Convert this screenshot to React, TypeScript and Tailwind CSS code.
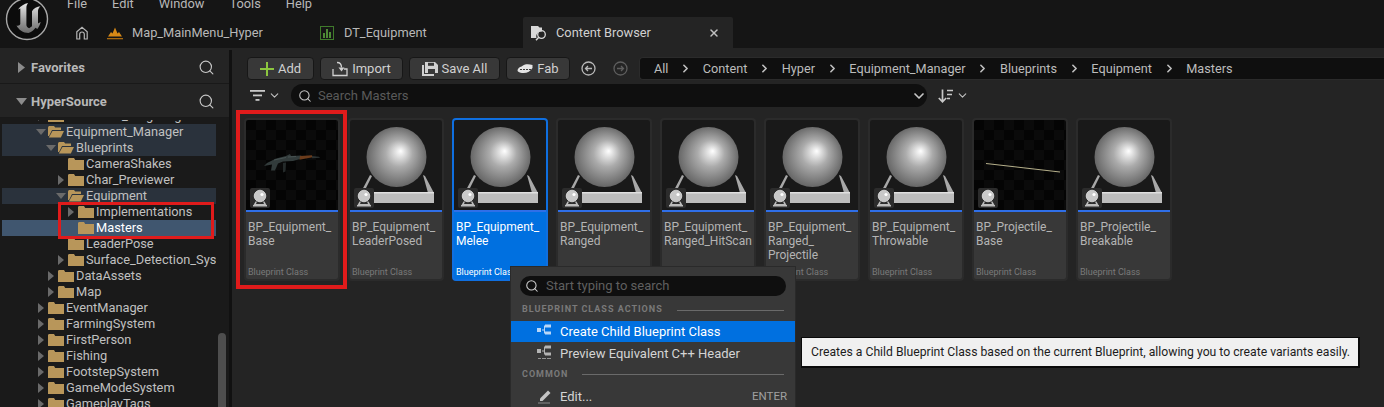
import { ChevronDown, ChevronRight, Search, X } from 'lucide-react';
import clsx from 'clsx';

type TreeRow = {
  name: string;
  depth: 0 | 1 | 2 | 3;
  arrow?: 'open' | 'closed';
  open?: boolean;
  tint?: boolean;
  selected?: boolean;
};

const indent = {
  0: 'pl-[32px]',
  1: 'pl-[42px]',
  2: 'pl-[52px]',
  3: 'pl-[62px]',
};

const treeRows: TreeRow[] = [
  { name: 'Enhanced_Targeting', depth: 0, arrow: 'closed' },
  { name: 'Equipment_Manager', depth: 0, arrow: 'open', open: true, tint: true },
  { name: 'Blueprints', depth: 1, arrow: 'open', open: true, tint: true },
  { name: 'CameraShakes', depth: 2 },
  { name: 'Char_Previewer', depth: 2, arrow: 'closed' },
  { name: 'Equipment', depth: 2, arrow: 'open', open: true, tint: true },
  { name: 'Implementations', depth: 3, arrow: 'closed' },
  { name: 'Masters', depth: 3, selected: true },
  { name: 'LeaderPose', depth: 2 },
  { name: 'Surface_Detection_System', depth: 2, arrow: 'closed' },
  { name: 'DataAssets', depth: 1, arrow: 'closed' },
  { name: 'Map', depth: 1, arrow: 'closed' },
  { name: 'EventManager', depth: 0, arrow: 'closed' },
  { name: 'FarmingSystem', depth: 0, arrow: 'closed' },
  { name: 'FirstPerson', depth: 0, arrow: 'closed' },
  { name: 'Fishing', depth: 0, arrow: 'closed' },
  { name: 'FootstepSystem', depth: 0, arrow: 'closed' },
  { name: 'GameModeSystem', depth: 0, arrow: 'closed' },
  { name: 'GameplayTags', depth: 0, arrow: 'closed' },
];

type Tile = {
  lines: string[];
  thumb: 'gun' | 'sphere' | 'trail';
  selected?: boolean;
};

const tiles: Tile[] = [
  { lines: ['BP_Equipment_', 'Base'], thumb: 'gun' },
  { lines: ['BP_Equipment_', 'LeaderPosed'], thumb: 'sphere' },
  { lines: ['BP_Equipment_', 'Melee'], thumb: 'sphere', selected: true },
  { lines: ['BP_Equipment_', 'Ranged'], thumb: 'sphere' },
  { lines: ['BP_Equipment_', 'Ranged_HitScan'], thumb: 'sphere' },
  { lines: ['BP_Equipment_', 'Ranged_', 'Projectile'], thumb: 'sphere' },
  { lines: ['BP_Equipment_', 'Throwable'], thumb: 'sphere' },
  { lines: ['BP_Projectile_', 'Base'], thumb: 'trail' },
  { lines: ['BP_Projectile_', 'Breakable'], thumb: 'sphere' },
];

const crumbs = ['All', 'Content', 'Hyper', 'Equipment_Manager', 'Blueprints', 'Equipment', 'Masters'];

function Logo() {
  return (
    <svg width="44" height="44" viewBox="0 0 44 44">
      <defs>
        <linearGradient id="logoFill" x1="0" y1="0" x2="0" y2="1">
          <stop offset="0" stopColor="#e8e8e8" />
          <stop offset="0.6" stopColor="#9a9a9a" />
          <stop offset="1" stopColor="#6b6b6b" />
        </linearGradient>
      </defs>
      <circle cx="22" cy="22" r="20.500" fill="#0c0c0c" stroke="#a8a8a8" strokeWidth="1.400" />
      <path
        d="M23 6c-3.500 .8-7.500 3-10 6.500l2.300-1v15.500c-.6 1.500-2 2-3.800 1.500 2 4 6.500 7.500 12 7.500 3.500-1 5.500-3.500 7-5.300l1.800 1.300c1.500-2 2.800-4.500 3.400-7l-2.700 1.400V14c0-1.800 1-3.500 2.500-4.800-3.500 .3-7 2.300-8.500 5v15l-2.800 2c-1.500-.4-2.800-1.600-2.800-3.200V11c0-2 .6-3.500 1.600-5z"
        fill="url(#logoFill)"
      />
    </svg>
  );
}

function HomeIcon() {
  return (
    <svg width="14" height="14" viewBox="0 0 14 14" fill="none" stroke="#b5b5b5" strokeWidth="1.200">
      <path d="M1.800 13V5.800L7 1.300l5.200 4.500V13H9.300V8.300a2.300 2.300 0 0 0-4.600 0V13z" />
    </svg>
  );
}

function LevelIcon() {
  return (
    <svg width="16" height="14" viewBox="0 0 16 14">
      <path d="M1 10.500 4 6l1.500 1.500L8 1.500l2.500 6L12 6l3 4.500z" fill="#d98a16" />
      <rect x="0" y="12" width="16" height="1.300" fill="#a8690f" />
    </svg>
  );
}

function TableIcon() {
  return (
    <svg width="14" height="14" viewBox="0 0 14 14">
      <rect x="0.500" y="0.500" width="13" height="13" fill="none" stroke="#3f7a2b" />
      <rect x="3" y="7" width="2" height="5" fill="#4d8a35" />
      <rect x="6" y="3" width="2" height="9" fill="#4d8a35" />
      <rect x="9" y="6" width="2" height="6" fill="#4d8a35" />
    </svg>
  );
}

function BrowserIcon() {
  return (
    <svg width="16" height="16" viewBox="0 0 16 16">
      <path d="M0 1h7l1.500 1.500H11v4a5 5 0 0 0-5.500 6.500H0z" fill="#d8d8d8" />
      <circle cx="10.500" cy="9.500" r="3.800" fill="none" stroke="#d8d8d8" strokeWidth="1.300" />
      <path d="M7.800 12.200 5 15.200" stroke="#d8d8d8" strokeWidth="1.500" />
    </svg>
  );
}

function Folder({ open }: { open?: boolean }) {
  if (open) {
    return (
      <svg width="16" height="14" viewBox="0 0 16 14" className="shrink-0">
        <path d="M0 2.500 0.800 1H6l1.200 1.500H13V5H4L1 11H0z" fill="#b8965a" />
        <path d="M4.500 6H16l-3.200 6.500H0.800z" fill="#b8965a" />
      </svg>
    );
  }
  return (
    <svg width="16" height="14" viewBox="0 0 16 14" className="shrink-0">
      <path d="M0 2 .8 1H6l1.200 2H16v10H0z" fill="#b8965a" />
    </svg>
  );
}

function Row({ row }: { row: TreeRow }) {
  return (
    <div
      className={clsx('flex h-4 items-center overflow-hidden whitespace-nowrap', indent[row.depth], {
        'bg-[#2a323c]': row.tint,
        'bg-[#40566f] text-white': row.selected,
        'text-[#c0c0c0]': !row.selected,
      })}
    >
      <span className="flex w-3.5 shrink-0 justify-center">
        {row.arrow === 'open' && (
          <svg width="10" height="6" viewBox="0 0 10 6">
            <path d="M0 0h10L5 6z" fill="#6a6a6a" />
          </svg>
        )}
        {row.arrow === 'closed' && (
          <svg width="6" height="10" viewBox="0 0 6 10">
            <path d="M0 0v10l6-5z" fill="#6a6a6a" />
          </svg>
        )}
      </span>
      <Folder open={row.open} />
      <span className="ml-0.5">{row.name}</span>
    </div>
  );
}

function SidebarHeader({ title, open }: { title: string; open?: boolean }) {
  return (
    <div className="flex h-[34px] shrink-0 items-center border-b border-[#191919] bg-[#242424] pl-[16px] pr-[14px] pt-[2px]">
      {open ? (
        <svg width="11" height="7" viewBox="0 0 11 7">
          <path d="M0 0h11L5.500 7z" fill="#8c8c8c" />
        </svg>
      ) : (
        <svg width="7" height="11" viewBox="0 0 7 11" className="mx-0.5">
          <path d="M0 0v11l7-5.500z" fill="#8c8c8c" />
        </svg>
      )}
      <span className="ml-[4px] text-[13px] font-bold text-[#b8b8b8]">{title}</span>
      <Search size={17} strokeWidth={1.600} className="ml-auto text-[#c8c8c8]" />
    </div>
  );
}

function Sidebar() {
  return (
    <aside className="relative flex w-[229px] shrink-0 flex-col overflow-hidden bg-[#1a1a1a]">
      <SidebarHeader title="Favorites" />
      <SidebarHeader title="HyperSource" open />
      <div className="mt-[2px] flex-1 overflow-hidden">
        <div className="-mt-[12px] flex flex-col pl-0.5 pr-[13px] text-[12.800px]">
          {treeRows.map((row) => (
            <Row key={row.name} row={row} />
          ))}
        </div>
      </div>
      {/* scrollbar thumb */}
      <div className="absolute bottom-0 left-[218px] top-[283px] w-2 rounded-t bg-[#4e4e4e]" />
    </aside>
  );
}

function ToolButton({ icon, label, width }: { icon: React.ReactNode; label: string; width: string }) {
  return (
    <button
      className={clsx(
        'flex h-[23px] items-center justify-center gap-1 rounded-[4px] border border-[#171717] bg-[#383838] pt-px text-[13px] text-[#d0d0d0]',
        width,
      )}
    >
      {icon}
      {label}
    </button>
  );
}

function ArrowCircle({ left, dim }: { left?: boolean; dim?: boolean }) {
  return (
    <svg width="15" height="15" viewBox="0 0 15 15" fill="none" stroke={dim ? '#5e5e5e' : '#b8b8b8'} strokeWidth="1.300">
      <circle cx="7.500" cy="7.500" r="6.500" />
      <path d={left ? 'M11 7.500H4.500M7 5 4.500 7.500 7 10' : 'M4 7.500h6.500M8 5l2.500 2.500L8 10'} />
    </svg>
  );
}

function Toolbar() {
  return (
    <div className="flex h-[34px] shrink-0 items-center pl-[15px] pt-[3px]">
      <div className="flex gap-[6px]">
        <ToolButton
          width="w-[67px]"
          label="Add"
          icon={
            <svg width="14" height="14" viewBox="0 0 14 14">
              <path d="M6 0h2v6h6v2H8v6H6V8H0V6h6z" fill="#8cc63f" />
            </svg>
          }
        />
        <ToolButton
          width="w-[83px]"
          label="Import"
          icon={
            <svg width="16" height="16" viewBox="0 0 16 16" fill="none" stroke="#d0d0d0" strokeWidth="1.300">
              <path d="M1 8v6.500h14V8h-3M5 1.500c3 0 4.500 1.500 4.500 5" />
              <path d="M6.500 6.500h6l-3 4z" fill="#d0d0d0" stroke="none" />
            </svg>
          }
        />
        <ToolButton
          width="w-[91px]"
          label="Save All"
          icon={
            <svg width="16" height="14" viewBox="0 0 16 14">
              <path d="M3 0h10l3 3v8H3z" fill="#d0d0d0" />
              <path d="M0 3h2v9h10v2H0z" fill="#d0d0d0" />
              <rect x="6" y="0.800" width="6" height="3" fill="#383838" />
              <rect x="6" y="7" width="7" height="4" fill="#383838" />
            </svg>
          }
        />
        <ToolButton
          width="w-[64px]"
          label="Fab"
          icon={
            <svg width="16" height="12" viewBox="0 0 16 12">
              <path d="M1 6c1-2 3-2 5-3.500C8 1 12 1 15.500 2v3c-2 3-5 5-9 5-2 0-4 0-5.500-1.500-.6-.7-.6-1.500 0-2.500z" fill="#e4e4e4" />
              <path d="M3 6.500h11" stroke="#383838" strokeWidth="1" strokeDasharray="2 1" />
            </svg>
          }
        />
      </div>
      <div className="ml-[9px] flex w-[57px] items-center gap-[17px] pl-0.5">
        <ArrowCircle left />
        <ArrowCircle dim />
      </div>
      <nav className="ml-[3px] flex h-[23px] flex-1 items-center gap-[12.700px] rounded-l-[4px] border-y border-l border-[#2b2b2b] bg-[#0f0f0f] pl-[14px] pt-px text-[12.700px] text-[#bcbcbc]">
        {crumbs.map((crumb, i) => (
          <div key={crumb} className="flex items-center gap-[12.700px]">
            {i > 0 && <ChevronRight size={13} strokeWidth={3} className="-mx-0.5 text-[#c0c0c0]" />}
            <span>{crumb}</span>
          </div>
        ))}
      </nav>
    </div>
  );
}

function SearchRow() {
  return (
    <div className="flex h-[23px] shrink-0 items-center pl-[18px]">
      <svg width="15" height="13" viewBox="0 0 15 13" fill="#c8c8c8">
        <rect x="0" y="1" width="15" height="1.800" />
        <rect x="3" y="5.500" width="9" height="1.800" />
        <rect x="5.500" y="10" width="4" height="1.800" />
      </svg>
      <ChevronDown size={13} strokeWidth={2} className="ml-[3px] text-[#c0c0c0]" />
      <div className="ml-[10px] flex h-[23px] w-[636px] items-center rounded-full bg-[#0f0f0f] pl-[7px] text-[13px] text-[#5a5a5a]">
        <Search size={14} strokeWidth={1.800} className="text-[#c8c8c8]" />
        <span className="ml-[6px]">Search Masters</span>
        <ChevronDown size={16} strokeWidth={2.500} className="ml-auto text-[#c8c8c8]" />
      </div>
      <svg width="16" height="14" viewBox="0 0 16 14" fill="none" stroke="#c8c8c8" strokeWidth="1.700" className="ml-[11px]">
        <path d="M4.500 0.500V12.500M0.800 9l3.700 3.800L8.200 9" />
        <path d="M9 1.500h6M9 5.500h5M9 9.500h3" />
      </svg>
      <ChevronDown size={13} strokeWidth={2} className="ml-[2px] text-[#c0c0c0]" />
    </div>
  );
}

function MiniBlueprint() {
  return (
    <g>
      <rect x="0" y="0" width="20" height="20" rx="2" fill="#2c2c2c" />
      <circle cx="10" cy="8" r="5.800" fill="#c8c8c8" stroke="#eeeeee" strokeWidth="0.700" />
      <circle cx="12" cy="6.500" r="1.600" fill="#ffffff" />
      <path d="M5.500 13.500 3 18h14l-2.500-4.500-1.500 0 1 2.600H6l1-2.600z" fill="#bdbdbd" />
      <rect x="3" y="17" width="14" height="1.500" fill="#bdbdbd" />
    </g>
  );
}

function SphereThumb({ id }: { id: string }) {
  return (
    <svg viewBox="0 0 92 90" className="h-full w-full">
      <defs>
        <radialGradient id={id} cx="0.500" cy="0.500" fx="0.570" fy="0.400" r="0.560">
          <stop offset="0" stopColor="#ffffff" />
          <stop offset="0.400" stopColor="#ababab" />
          <stop offset="1" stopColor="#5a5a5a" />
        </radialGradient>
      </defs>
      <circle cx="46.500" cy="37" r="30" fill={`url(#${id})`} />
      <path d="M20 55 22 56 14 72H11zM73 55l2 1 9 17h-6z" fill="#a8a8a8" />
      <path d="M23 72h61v11H23z" fill="#bdbdbd" />
      <path d="M23 72h61v1.500H23z" fill="#e0e0e0" />
      <g transform="translate(4 68)">
        <MiniBlueprint />
      </g>
    </svg>
  );
}

function GunThumb() {
  return (
    <svg viewBox="0 0 92 90" className="h-full w-full">
      <g transform="translate(0 -4)">
        <path d="M21 47 30 42.500l10-2.500 4-2 1 2 10-.5 3 2.500-11 3-10 .5-5 2-3 7h-4l1-6-8 1.500z" fill="#323b3b" />
        <path d="M54 40l12-.8 .5 2-13 2.500z" fill="#6b3c1c" />
        <path d="M66 40l7 .8 1 1-8 .5z" fill="#2c3232" />
        <path d="M37 47l3-.5-.5 9-2.500 1z" fill="#242a2a" />
        <path d="M28 44l12-2.500M42 41l8-.5" stroke="#5f6a6a" strokeWidth="0.500" />
      </g>
      <g transform="translate(4 68)">
        <MiniBlueprint />
      </g>
    </svg>
  );
}

function TrailThumb() {
  return (
    <svg viewBox="0 0 92 90" className="h-full w-full">
      <path d="M12 43.500 86 52" stroke="#c9c39a" strokeWidth="0.900" />
      <g transform="translate(4 68)">
        <MiniBlueprint />
      </g>
    </svg>
  );
}

function AssetTile({ tile, index }: { tile: Tile; index: number }) {
  const checker = tile.thumb !== 'sphere';
  return (
    <div
      className={clsx(
        'flex h-[163px] w-[96px] flex-col rounded-[4px] border-2',
        tile.selected ? 'border-[#0f6fe0] bg-[#0070e0] text-white' : 'border-[#2b2b2b] bg-[#383838] text-[#b4b4b4]',
      )}
    >
      <div
        className={clsx(
          'h-[90px] shrink-0 rounded-t-[2px]',
          checker
            ? 'bg-[#050505] bg-[repeating-conic-gradient(#0a0a0a_0%_25%,#040404_0%_50%)] bg-size-[20px_20px]'
            : 'bg-[#191919]',
        )}
      >
        {tile.thumb === 'sphere' && <SphereThumb id={`sphere${index}`} />}
        {tile.thumb === 'gun' && <GunThumb />}
        {tile.thumb === 'trail' && <TrailThumb />}
      </div>
      <div className="h-0.5 shrink-0 bg-[#2f6fe8]" />
      <div className="flex flex-1 flex-col px-[2px] pb-px pt-2">
        <div className="text-[12px] leading-[14px]">
          {tile.lines.map((line) => (
            <div key={line}>{line}</div>
          ))}
        </div>
        <div className={clsx('mt-auto text-[9px] leading-[12px]', tile.selected ? 'text-white' : 'text-[#7a7a7a]')}>
          Blueprint Class
        </div>
      </div>
    </div>
  );
}

function ChildIcon({ cpp }: { cpp?: boolean }) {
  return (
    <svg width="16" height="16" viewBox="0 0 16 16" fill={cpp ? '#b4b4b4' : '#b9d6f7'}>
      <rect x="0" y="4" width="4" height="4" />
      <rect x="5" y="5.500" width="3" height="1" />
      <rect x="7" y="1.500" width="1" height="8" />
      <rect x="8" y="0.500" width="6" height="3" />
      <rect x="8" y="7.500" width="6" height="3" />
      {cpp && <path d="M1 13h3v.8H1zM5 13h4v.8H5zM10 13h4v.8h-4z" />}
    </svg>
  );
}

function MenuHeading({ label, className }: { label: string; className?: string }) {
  return (
    <div
      className={clsx(
        'flex h-5 items-center gap-[14px] pl-[11px] pr-[11px] text-[9px] font-bold tracking-[1px] text-[#7a7a7a]',
        className,
      )}
    >
      {label}
      <div className="h-px flex-1 bg-[#6a6a6a]" />
    </div>
  );
}

function ContextMenu() {
  return (
    <div className="absolute left-[510px] top-[216px] w-[286px] overflow-hidden border border-[#2a2a2a] bg-[#383838] text-[13px] text-[#d4d4d4]">
      <div className="mx-[9px] mt-[9px] flex h-5 w-[266px] items-center rounded-full bg-[#0f0f0f] pl-[5px] text-[#5f5f5f]">
        <Search size={14} strokeWidth={1.800} className="text-[#d0d0d0]" />
        <span className="ml-[7px]">Start typing to search</span>
      </div>
      <MenuHeading label="BLUEPRINT CLASS ACTIONS" className="mt-[5px] pb-[2px]" />
      <div className="flex h-[21px] items-center bg-[#0070e0] pl-[26px] text-white">
        <ChildIcon />
        <span className="ml-[7px] pt-px">Create Child Blueprint Class</span>
      </div>
      <div className="flex h-[22px] items-center pl-[26px]">
        <ChildIcon cpp />
        <span className="ml-[7px] pt-px">Preview Equivalent C++ Header</span>
      </div>
      <MenuHeading label="COMMON" className="pt-px" />
      <div className="flex h-[24px] items-center pl-[26px] pr-2">
        <svg width="16" height="16" viewBox="0 0 16 16" fill="#c4c4c4">
          <path d="M3 10.500 11 2.500l2.500 2.500-8 8H3z" />
          <rect x="1" y="14.500" width="12" height="1" fill="#8a8a8a" />
        </svg>
        <span className="ml-[7px] pt-px">Edit...</span>
        <span className="ml-auto pt-px text-[11.500px] text-[#a0a0a0]">ENTER</span>
      </div>
    </div>
  );
}

export default function App() {
  return (
    <div className="flex h-[407px] w-[1384px] flex-col overflow-hidden bg-[#151515] font-['Roboto',sans-serif]">
      <header className="flex h-[48px] shrink-0 bg-[#151515]">
        <div className="-mt-[3px] w-[54px] pl-[5px]">
          <Logo />
        </div>
        <div className="flex flex-1 flex-col">
          <div className="flex h-[8px] items-center gap-[25px] pl-[13px] text-[12.800px] text-[#b8b8b8]">
            <span>File</span>
            <span>Edit</span>
            <span>Window</span>
            <span>Tools</span>
            <span>Help</span>
          </div>
          <div className="mt-[9px] flex h-[31px] items-center text-[12.800px] text-[#b8b8b8]">
            <div className="ml-[21px] w-[32px]">
              <HomeIcon />
            </div>
            <div className="flex w-[213px] items-center gap-[9px]">
              <LevelIcon />
              <span className="pt-px">Map_MainMenu_Hyper</span>
            </div>
            <div className="flex w-[203px] items-center gap-[10px]">
              <TableIcon />
              <span className="pt-px">DT_Equipment</span>
            </div>
            <div className="flex h-[31px] w-[210px] items-center rounded-t-[2px] bg-[#242424] pl-2 pr-[13px] text-[#d0d0d0]">
              <BrowserIcon />
              <span className="ml-[9px] pt-px">Content Browser</span>
              <X size={12} strokeWidth={3} className="ml-auto text-[#c0c0c0]" />
            </div>
          </div>
        </div>
      </header>
      <div className="h-0.5 shrink-0 bg-[#242424]" />
      <div className="relative flex flex-1 overflow-hidden">
        <Sidebar />
        <div className="w-[3px] shrink-0 bg-[#111111]" />
        <main className="flex flex-1 flex-col overflow-hidden bg-[#242424]">
          <Toolbar />
          <SearchRow />
          <div className="flex gap-2 pl-[12px] pt-[11px]">
            {tiles.map((tile, i) => (
              <AssetTile key={i} tile={tile} index={i} />
            ))}
          </div>
        </main>
        {/* hand drawn red markers from the screenshot */}
        <div className="absolute left-[236px] top-[60px] h-[179px] w-[111px] border-[4px] border-[#e01b1b]" />
        <div className="absolute left-[58px] top-[152px] h-[37px] w-[156px] border-[3px] border-[#e01b1b]" />
        <ContextMenu />
        <div className="absolute left-[801px] top-[287px] flex h-[31px] w-[559px] items-center whitespace-nowrap border border-b-2 border-r-2 border-[#0a0a0a] bg-[#f0f0f0] pl-[9px] text-[12.200px] text-[#1c1c1c]">
          Creates a Child Blueprint Class based on the current Blueprint, allowing you to create variants easily.
        </div>
      </div>
    </div>
  );
}
